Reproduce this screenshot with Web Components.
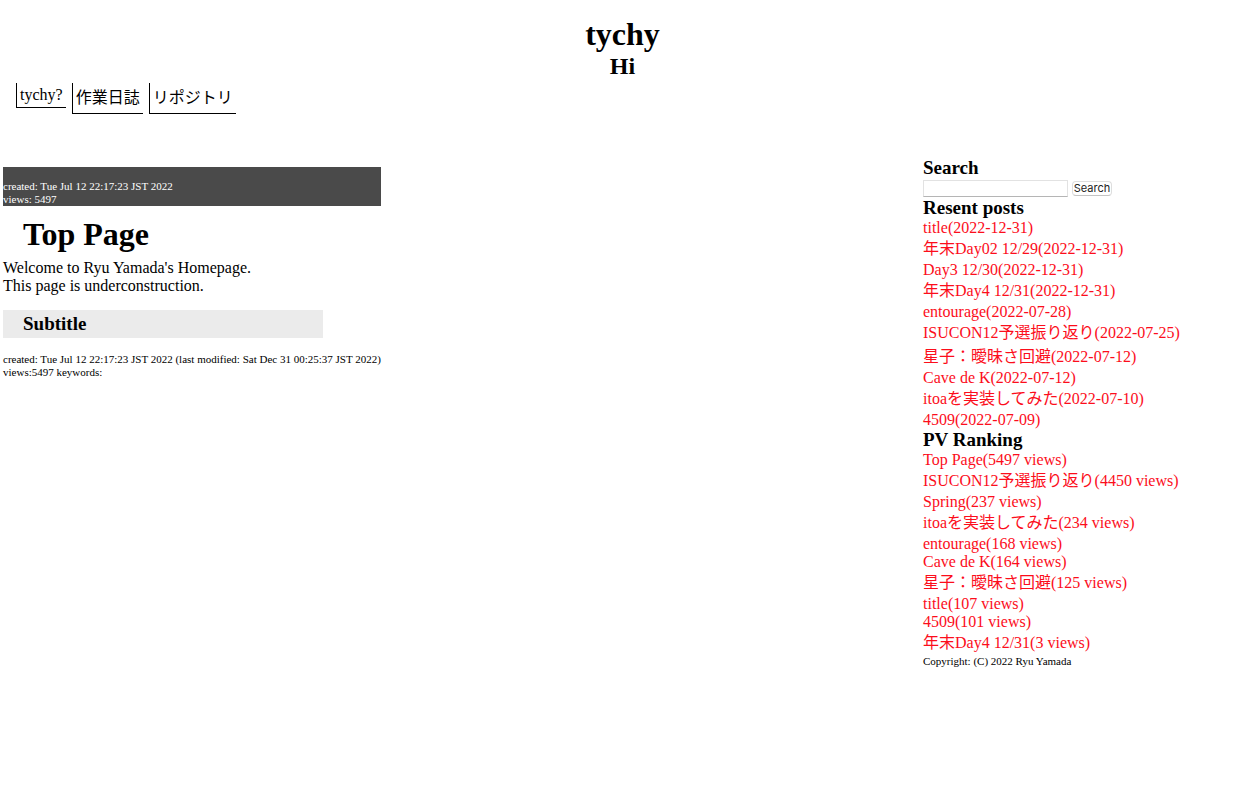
<!DOCTYPE html>
<html lang="ja">
<head>
<meta charset="utf-8">
<meta name="viewport" content="width=device-width, initial-scale=1">
<title>tychy</title>
<style>
body { margin: 0; background: #fff; color: #000; font: 16px/18px "Liberation Serif", "Noto Sans CJK JP", serif; }
</style>
</head>
<body>
<home-page></home-page>

<script>
const define = (name, html, setup) => {
  const template = document.createElement('template');
  template.innerHTML = html;
  customElements.define(name, class extends HTMLElement {
    connectedCallback() {
      if (this.shadowRoot) return;
      this.attachShadow({ mode: 'open' }).append(template.content.cloneNode(true));
      if (setup) setup(this, this.shadowRoot);
    }
  });
};

const isWide = text => /[^\x00-\x7f]/.test(text);

define('site-header', `
<style>
:host { display: block; text-align: center; padding-top: 16px; }
h1, h2 { margin: 0; }
h1 { font-size: 32px; line-height: 36px; }
h2 { font-size: 24px; line-height: 28px; }
</style>
<header><h1><slot name="title"></slot></h1><h2><slot name="tagline"></slot></h2></header>`);

define('site-nav', `
<style>
:host { display: block; padding: 3px 16px 0; }
nav { display: flex; flex-wrap: wrap; align-items: flex-start; gap: 6px; min-height: 31px; }
</style>
<nav aria-label="Main"><slot></slot></nav>`);

define('nav-item', `
<style>
:host { display: block; border: solid #000; border-width: 0 0 1px 1px; padding: 3px; line-height: 18px; }
:host([wide]) { line-height: 24px; }
a { display: block; color: inherit; text-decoration: none; }
</style>
<a href="#"><slot></slot></a>`, host => host.toggleAttribute('wide', isWide(host.textContent)));

define('page-article', `
<style>
:host { display: block; padding-top: 10px; }
.meta { background: #4a4a4a; color: #fff; padding-top: 13px; }
.meta, .info { font-size: 11px; line-height: 13px; }
h1 { margin: 10px 0 6px; padding-left: 20px; font-size: 32px; line-height: 37px; }
p { margin: 0; }
h3 { box-sizing: border-box; max-width: 320px; margin: 15px 0; padding: 3px 20px; background: #ebebeb; font-size: 19px; line-height: 22px; }
</style>
<article>
<div class="meta">created: Tue Jul 12 22:17:23 JST 2022<br>views: 5497</div>
<h1><slot name="title"></slot></h1>
<p><slot></slot></p>
<h3><slot name="subtitle"></slot></h3>
<div class="info">created: Tue Jul 12 22:17:23 JST 2022 (last modified: Sat Dec 31 00:25:37 JST 2022)<br>views:5497 keywords:</div>
</article>`);

define('side-section', `
<style>
:host { display: block; }
h3 { margin: 0; font-size: 19px; line-height: 22px; }
</style>
<section><h3></h3><slot></slot></section>`, (host, root) => {
  root.querySelector('h3').textContent = host.getAttribute('heading');
});

define('search-form', `
<style>
:host { display: block; }
form { display: flex; align-items: center; gap: 4px; height: 17px; padding-top: 1px; }
input { box-sizing: border-box; width: 145px; height: 17px; margin: 0; padding: 1px; border: 1px solid #e2e2e2; border-bottom-color: #b5b5b5; border-radius: 0; background: #fff; font: 11px/13px "Liberation Sans", sans-serif; }
button { box-sizing: border-box; width: 40px; height: 15px; margin: 0; padding: 0; border: 1px solid #dedede; border-bottom-color: #c4c4c4; border-radius: 4px; background: #fff; color: #222; font: 11px/13px Inter, sans-serif; }
</style>
<form role="search"><input type="text" aria-label="Search"><button type="button">Search</button></form>`);

define('link-list', `
<style>
:host { display: block; }
ul { margin: 0; padding: 0; list-style: none; }
li { line-height: 18px; }
li.wide { line-height: 24px; }
a { color: #fc0d1b; text-decoration: none; }
</style>
<ul></ul>`, (host, root) => {
  const list = root.querySelector('ul');
  for (const text of host.textContent.trim().split('\n')) {
    const item = document.createElement('li');
    const link = document.createElement('a');
    link.href = '#';
    link.textContent = text.trim();
    item.classList.toggle('wide', isWide(text));
    item.append(link);
    list.append(item);
  }
});

define('page-sidebar', `
<style>
:host { display: block; }
footer { font-size: 11px; line-height: 13px; }
</style>
<aside>
<side-section heading="Search"><search-form></search-form></side-section>
<side-section heading="Resent posts"><link-list>
title(2022-12-31)
年末Day02 12/29(2022-12-31)
Day3 12/30(2022-12-31)
年末Day4 12/31(2022-12-31)
entourage(2022-07-28)
ISUCON12予選振り返り(2022-07-25)
星子：曖昧さ回避(2022-07-12)
Cave de K(2022-07-12)
itoaを実装してみた(2022-07-10)
4509(2022-07-09)
</link-list></side-section>
<side-section heading="PV Ranking"><link-list>
Top Page(5497 views)
ISUCON12予選振り返り(4450 views)
Spring(237 views)
itoaを実装してみた(234 views)
entourage(168 views)
Cave de K(164 views)
星子：曖昧さ回避(125 views)
title(107 views)
4509(101 views)
年末Day4 12/31(3 views)
</link-list></side-section>
<footer>Copyright: (C) 2022 Ryu Yamada</footer>
</aside>`);

define('home-page', `
<style>
:host { display: block; padding-right: 15px; }
.columns { display: grid; grid-template-columns: minmax(0, 1fr) 320px; align-items: start; padding: 43px 2px 0 3px; }
page-article { justify-self: start; }
</style>
<site-header><span slot="title">tychy</span><span slot="tagline">Hi</span></site-header>
<site-nav><nav-item>tychy?</nav-item><nav-item>作業日誌</nav-item><nav-item>リポジトリ</nav-item></site-nav>
<main class="columns">
<page-article><span slot="title">Top Page</span>Welcome to Ryu Yamada's Homepage.<br>This page is underconstruction.<span slot="subtitle">Subtitle</span></page-article>
<page-sidebar></page-sidebar>
</main>`);
</script>
</body>
</html>
